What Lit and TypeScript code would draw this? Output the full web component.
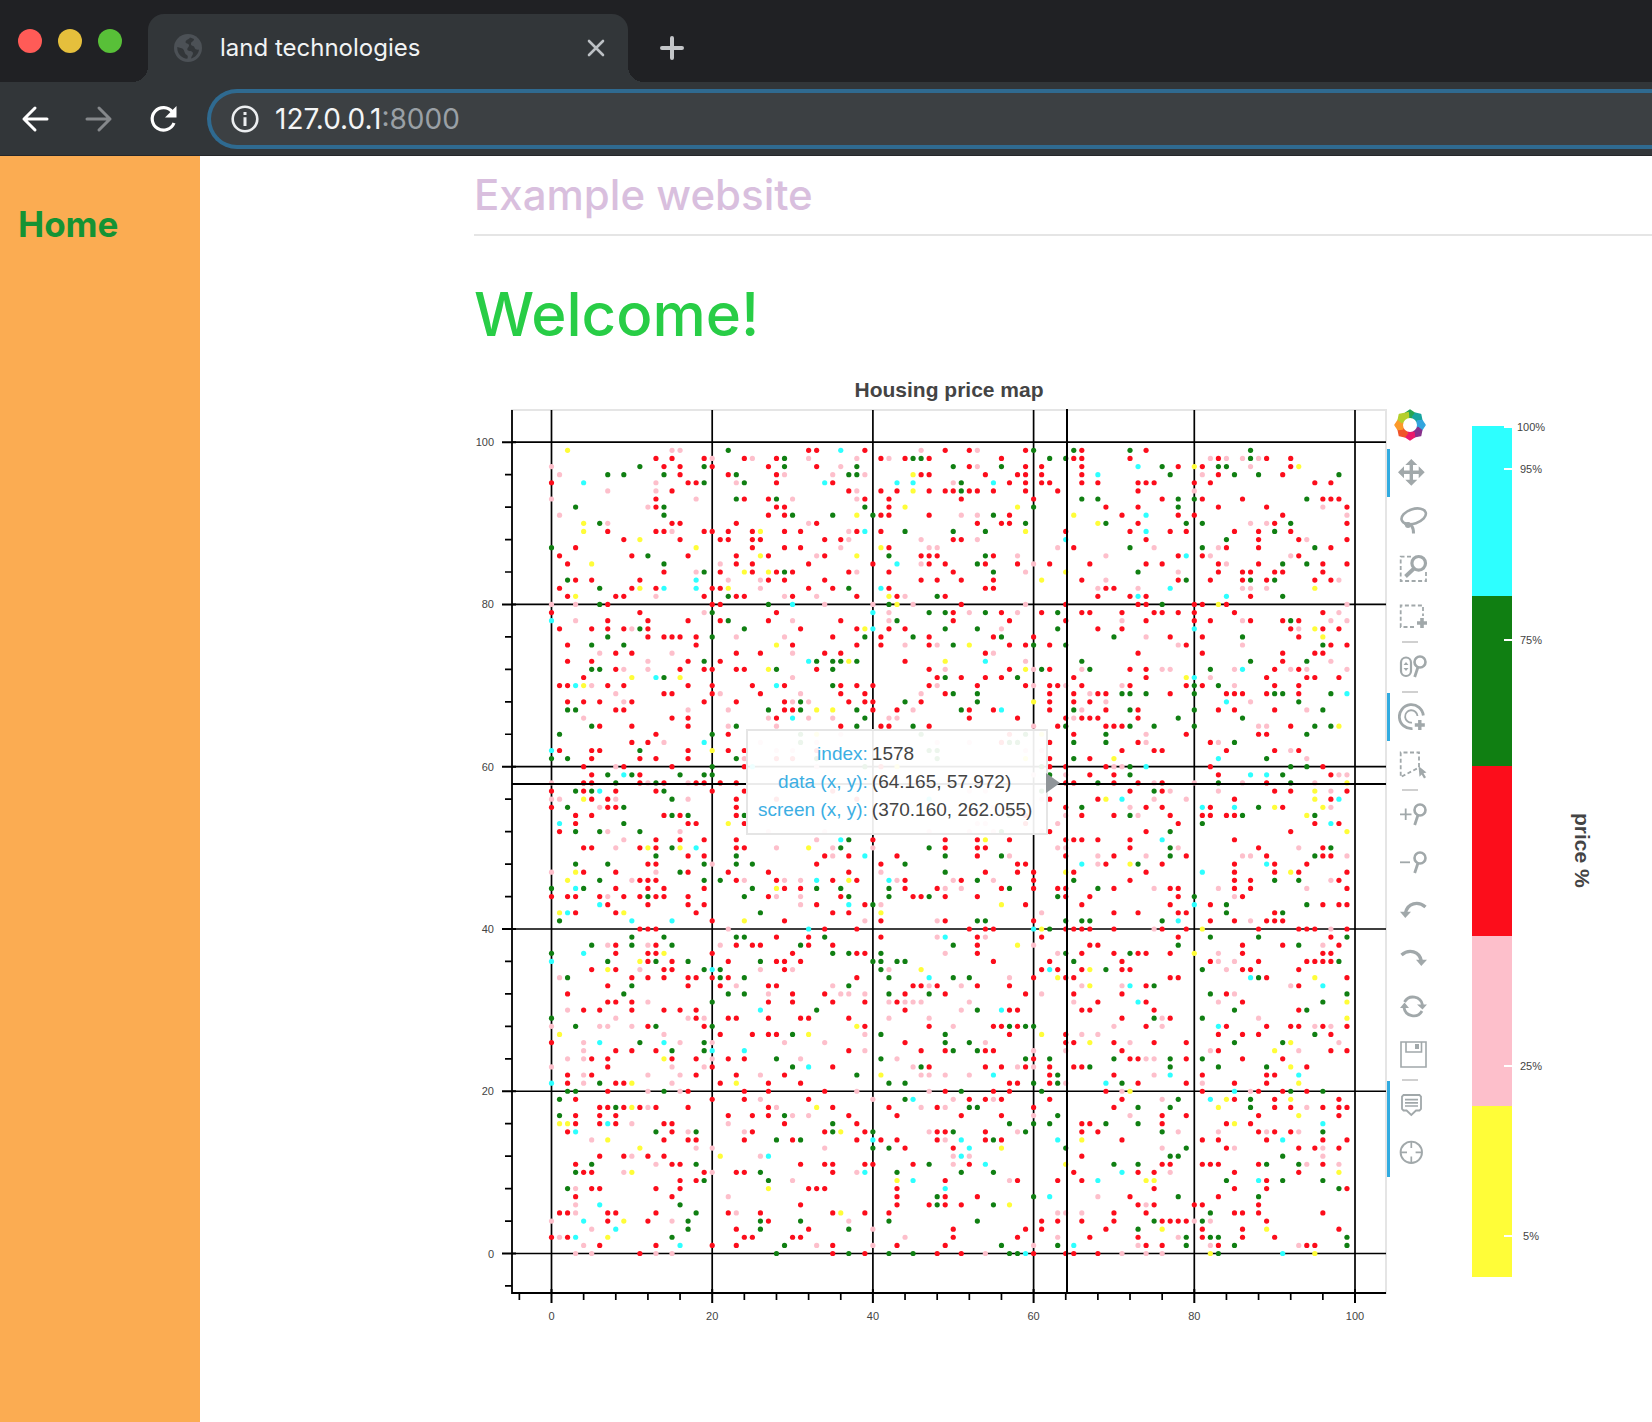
import { LitElement, html, css, svg } from "lit";
import { customElement } from "lit/decorators.js";
import { classMap } from "lit/directives/class-map.js";

/* Scatter rows, from y = 99 down to y = 0: each entry is column + colour key. */
const ROWS = `2y 15p 16p 22g 32r 33r 36c 39r 46p 49r 52r 53p 59r 60g 65g 66r 72g 74r 87g
13r 15r 19r 20p 24r 25p 28r 29g 32p 38p 41r 42p 44r 45g 46g 47r 56r 62g 64g 65r 66r 72r 82p 83r 84p 86p 87g 88p 89r 92r
0p 11g 14r 16r 19g 20r 27r 29g 33r 36p 38g 50g 52r 53p 56g 59r 61r 66r 73c 76g 78r 80y 81r 83g 84g 87p 92r 93y
1p 7g 9g 14g 16r 22r 23g 28r 29p 35p 37g 38g 39p 45y 46r 47r 54r 58r 59r 61r 66r 68c 77g 81p 83r 85g 88g 91r 98g
0r 4c 13p 17r 18r 19g 23p 24g 28r 34c 35r 43c 45c 50p 51g 55c 57r 59r 61r 62r 66r 68r 73r 74r 75r 80r 82r 95r 97r
7p 13p 15r 37r 38p 41r 43r 45y 47r 49r 50r 51g 52r 53r 55r 59r 63r 73r 80p
0p 13r 18p 23g 24r 27r 28g 30p 38p 39r 42r 51r 60r 66g 68g 76r 78g 80g 81r 86r 94g 96r 97r 98r
3g 12p 13r 14g 28r 29r 39g 42r 44y 58y 60g 69r 73r 78g 83r 89r 96p 99r
1p 14g 27r 29r 30g 35g 38y 40g 41r 42r 47r 51p 53p 55g 57r 65y 71r 74c 78r 80r 91r 99p
4y 6g 7p 15r 16r 23r 32p 33r 53r 56r 57r 59g 68y 69g 73r 79g 81g 87p 89p 90r 92g 99r
4y 7r 13r 14r 15p 19r 20r 22r 25r 26y 29r 31r 37p 38r 39c 41r 44g 50g 54g 59y 64r 72r 74c 77r 79r 85r 88r 90g 92r
9r 11y 16r 21r 22r 25r 26r 34r 36r 37p 46p 50r 51r 53p 64c 74r 84g 88r 93r 94p 99r
0g 3r 18y 25r 29r 31r 36p 41y 42r 47p 48p 63p 65r 72g 75p 81g 83p 84r 88r 95g 97r
1r 10r 12g 17r 23r 26y 27r 33p 34r 38y 42g 46r 47r 48r 54g 55r 58p 69p 78r 79c 81r 82p 92p 93r
2r 5y 14g 21p 23r 25r 32r 40r 43c 46p 47r 49r 53g 54r 58r 60p 62r 67r 74r 76r 83r 84p 88r 91g 94g 96r 99r
14r 18p 19g 21r 24y 25r 27y 28r 29g 30r 37r 38p 42r 50r 55g 59p 64y 73g 78p 83r 86r 87r 90r 91r 96r
2g 3r 5r 11r 18c 22p 26p 27r 29r 34r 46r 48r 51r 55r 61y 66r 69p 78r 79g 82r 86r 87g 89r 90g 95r 97r 98p
1r 6g 10r 11y 13r 14c 18c 20r 21r 22y 26p 32r 35r 37g 41c 42r 54r 55r 68p 69r 70r 73p 77c 86p 87p 89p 95y
2r 3y 8r 9r 13p 19r 22g 23r 24r 29p 30r 33p 38r 42y 43r 44p 48g 49r 68r 72r 73c 74r 84c 87r 91g
0p 3p 6g 7r 20r 21r 27g 30c 34p 40p 42g 43y 45p 51r 59p 64r 73r 74r 76g 80r 81r 83y 84r 99p
0r 11r 19p 20g 28r 40c 42p 47g 49g 50r 52p 54g 56r 58p 61r 63g 66r 67r 71r 75r 76r 78r 80r 85r 96r 98p
0c 3p 7r 12r 17r 21r 22g 27r 30p 36r 42p 43g 50r 57r 64r 71p 74r 80r 82r 86p 87r 91r 92g 93r 97p 99p
1r 5r 7r 9r 10p 11g 12r 24g 31r 38r 39y 40c 42r 44r 49g 53g 56p 63g 68r 71r 80c 92r 93p 95y 96r 98r
7g 12r 14r 15r 16r 18r 20g 23p 29p 35r 39g 41r 45g 47r 55r 56g 60r 70g 74p 77r 81r 86g 93r 96y
2r 5g 9g 18r 28y 30r 38r 41r 44p 47r 48p 50g 52y 57r 59r 60g 62r 64g 78p 79r 86p 96g 97r 99r
6p 8r 10r 15p 23r 26r 30p 34r 36r 54r 55p 73r 81r 91r 95r 96r
2r 5r 12p 17r 19g 21r 32c 33g 35g 36g 37y 38g 44r 49y 54c 59p 66g 87g 91r 94g 97p
5g 6g 8r 9p 12p 16r 19r 20r 23r 24r 27y 28g 33r 35g 47r 49p 57r 59y 60p 61g 62r 66p 67g 72r 74r 76p 77p 82g 85p 86c 90r 92p 93r 94p 99p
4r 10y 13c 14g 16y 30p 48r 49g 51r 54r 56r 58g 65r 74r 79y 80c 82p 89r 94r 95r 98r
1r 2r 3c 4y 5p 7r 9r 17r 20r 25r 28c 29r 35g 36r 38r 40r 47r 48p 53r 59r 60p 62r 63r 64p 66r 71p 72r 79r 80g 81r 83g 85p 90r 93r
8p 14r 15r 20r 21p 26r 31p 36r 39r 46p 49r 50g 53g 62r 65r 67p 68r 69r 71g 72g 74g 77r 80g 84r 85r 86r 89r 90g 91g 93r 97g 99c
2r 4r 6r 9p 10r 19r 23r 29r 30p 31g 32p 37r 39r 40r 44g 46r 53g 60y 62r 65r 67r 69p 84c 87p 93g
2g 3g 8r 9r 17p 22p 27g 29r 30r 31g 33y 35y 38g 40r 43r 45p 51g 52r 55r 56c 62r 65g 66p 69r 72g 73r 80g 83r 85r 90r 94p 96g
4p 15r 17r 27p 28r 30c 32p 35p 39g 42p 43p 52r 58r 64r 65p 66r 67r 68r 73r 78g 86g
5g 6r 10r 17r 22p 23g 28p 36r 38g 41r 42r 45g 47r 60p 63r 64g 69r 70r 71r 72g 75g 80g 88p 89p 92r 95g 97g 98y
1g 13r 20g 22r 31g 33y 36p 46g 57r 59g 61y 65r 69g 74p 79r 88r 89r 94g
10r 12r 14p 19c 26p 31g 33p 48p 52p 56r 57g 58g 62r 65g 69g 73r 74p 82r 83p 85g
0c 1r 5r 6r 11g 17r 20y 22r 24r 28p 30p 33r 47g 48g 59p 61p 71r 75r 76r 84r 90r 92p 93r
0g 2g 5r 11r 13r 17r 23g 24p 28r 30r 33g 48g 59y 62r 65g 67r 70y 83c 89g 94p
4r 8p 9r 15r 20g 24r 25c 33p 39g 41r 43y 61g 62r 64r 69r 70p 71p 72g 74c 82r 92g 94g 96r
5r 7g 9c 10g 11r 16g 19g 20g 60p 62g 64p 67r 70r 72g 83r 87c 89c 91g 97r 98p 99p
0p 4r 5r 8g 11r 12p 13g 14r 17p 18r 19r 21r 23r 64r 65r 68g 70r 73r 75p 76r 80p 83g 86p 89r 92g 95p 99y
0r 3g 4r 5g 6c 8r 13r 14g 20r 24r 35r 52p 54p 61g 72r 75g 76r 77p 83p 90r 92r 95y 97p 99r
0p 1p 4y 5r 7r 8p 15g 17p 23r 28r 38r 47c 61p 62r 68r 69y 71c 75p 79p 85r 95y 97r 98c
0r 2g 6p 7r 8r 9g 23r 55p 57p 64r 66g 72p 74r 76r 81c 82r 85c 88g 90y 91r 96y 97p
3r 5r 14r 15g 16r 17g 23r 24g 57g 59r 64p 66r 70r 72g 73p 77r 81r 82r 84r 85r 86g 94y 95g
1c 3r 9g 17r 18r 22y 24r 53p 54p 59r 63p 78r 81g 95r 97c 98r
1r 3g 6g 7p 11g 16p 27p 34p 47p 52p 55p 56g 61p 62r 74r 77g 92r 99y
9p 13r 16r 19r 23r 33p 36c 37g 40r 49r 53r 54y 57r 64r 65r 66r 68r 72r 76c 85r
4r 5r 8p 11r 12y 13r 15g 16y 18c 23r 24r 28p 32y 35p 36g 40p 47g 49r 53r 54r 63p 64p 72r 77g 78p 88r 93p 96r 97g
13g 17r 19r 23g 34r 35p 37r 39c 43r 49g 53r 56g 57p 64r 68p 70r 74p 77g 79r 86p 87p 89r 95g 96r 97r 99p
3g 7g 12r 13r 19g 20p 23g 25g 33r 41r 44g 58r 59r 66c 68p 69r 72y 73g 76r 85r 89c 90r 94r
0p 3y 4r 8r 13p 16g 17r 22r 27r 37r 41p 49g 54r 58r 60r 64y 65r 74r 81c 85r 90r 92y 93r 99r
2y 6g 10p 11r 12r 13r 19g 21g 23r 24p 28r 29p 31p 33c 35r 37y 38r 42c 43p 44r 50p 51r 53g 55p 60r 65g 72r 85r 87r 90g 93g 97p 98r
0g 3c 4g 8r 12r 14r 19r 25g 28y 29r 31r 33g 36g 42g 44r 48r 49p 51p 56r 57g 60r 63r 64r 68g 70r 75p 77r 78r 83p 85r 87r 94p 99r
0r 2r 3r 6r 7p 9r 11r 12g 13r 14r 17r 24g 27r 28p 31p 36r 37g 42g 45r 46r 47g 49r 53r 63g 64r 67r 78r 80g 85p 86r
6c 7r 12r 17r 19r 31p 33r 37c 39r 40g 41p 56y 59r 66r 77r 80c 82r 84g 94g 96r 98r 99r
1y 2c 3r 8r 9y 18r 26g 35r 37r 41y 61p 70r 73r 78r 79r 84g 90r 91g
1g 10c 15c 20r 24y 29r 39p 41r 48p 49r 53g 54g 60r 64g 66g 67g 76g 78c 82r 85r 87p 89r 90r 91r
11r 12r 13r 22p 32c 34r 38r 52r 54r 55r 60c 61y 62g 64r 65r 66r 67r 70r 75p 76r 79r 81y 88r 93r 94r 95r 97p 99r
10g 14g 23g 24g 28r 32r 34g 41r 48p 49c 53r 54p 61r 78r 82g 88g 97r 99g
5g 7p 8r 10g 12p 13r 15g 21p 23r 25r 26r 31g 32r 35r 50g 53r 58y 60p 67r 68r 78g 86r 91r 93g 96p 98r
0g 4c 8r 12r 13r 14y 20r 30r 35g 37g 38r 39r 41g 49p 53r 63p 64g 66r 70r 72g 73r 74r 77r 80y 83p 86r 96r 97r
0c 7g 11y 12r 13g 15r 17g 22r 26g 28r 29r 31r 40g 41g 43g 44g 55r 62r 65g 71r 82r 83p 85p 88r 94r 95r 96r 97r 98g
5r 7y 8r 11p 14r 15r 19g 20c 21g 26p 29r 30p 41g 42p 46y 61r 62c 63r 66r 67y 69g 71r 72r 81g 84p 86r 87r 93r
1p 2g 10r 12r 14r 17r 18r 20r 21g 22r 24g 38r 42g 47c 50g 52g 57p 60r 63y 64r 65r 77r 78r 87c 88g 89r 95y 99r
7r 10g 17r 21r 23p 27r 28r 35p 37g 45r 46r 47p 48r 51p 53r 57r 66p 67y 71p 72c 74r 75g 92p 93r 96c
2r 9g 22g 24g 27p 30r 34r 36p 37p 39p 42g 44r 47g 49r 59r 61p 65r 71r 82g 84r 85p 99g
7r 8r 10r 12p 20g 27r 30r 35r 39r 42p 43r 44p 45p 46p 52p 65p 68r 73c 74r 83p 86r 96g 99y
2p 4r 6r 10r 14r 16r 18r 26c 33g 44r 51p 53g 56c 57r 58r 66r 67r 75r 85g 93r 94g
0g 8p 17p 18r 19p 22r 23r 27r 31r 32r 37r 42p 47p 71r 75g 76p 77r 81g 88p 99y
0p 3g 6p 7p 10p 12r 13g 19r 20g 38y 39r 47r 50p 55r 56r 57g 58r 59g 60g 70p 74r 76p 83c 84r 89r 92r 93r 95p 96r 97p 99r
1y 14p 21r 25r 27r 28r 30g 32y 39p 41g 49g 57r 61y 64r 66p 68p 83r 86r 88r 95g 97r
0r 4p 6c 11g 14c 16p 19g 20p 29p 34p 44r 49g 52g 54p 64r 65r 67y 70r 72p 75r 79r 85g 91g 92y 98p
4p 8r 10r 13r 15g 19g 20c 24c 37r 39p 46r 49r 50g 53g 54r 55r 60p 64p 71r 82p 83r 90y 93p 97r 99r
2p 4p 5r 7r 14y 15r 18r 20p 22r 24r 28g 31p 41g 43p 59g 60r 62g 70g 72r 73r 74p 75p 77g 79r 81g 86r 91r
0p 7r 15p 19p 20r 30g 32c 35r 45p 46g 47r 54r 56r 58p 59r 60p 62r 65r 66r 67g 77g 83g 89g 92y 94r
2r 4p 5r 12p 16p 18r 23r 26p 29r 38g 41y 46p 47p 49p 52p 55c 62r 63g 70r 75p 77c 81r 89r 90r 93c
0c 2r 4p 6g 8r 9r 10y 15p 21r 23y 27r 31r 42g 44g 57r 58r 60g 62r 63g 64p 69c 71g 73r 79r 81p 85r 89r 93y
2g 3g 7r 12p 14g 16p 17r 24r 27r 34r 38p 47p 49r 51g 55r 57r 61g 69r 71p 72y 81r 85c 87p 88r 91r 92g 94r 96g
1g 3r 20r 24r 26p 32r 40p 44g 45c 50p 52r 54r 55p 56r 62r 71r 76p 78g 82c 84y 85r 87g 90r 92y 98r
6r 7r 8g 9r 10y 11r 12p 13r 17r 27r 28p 33y 35r 42r 46p 48r 49p 52g 53g 60r 70r 73g 77g 83y 87g 90r 92r 94p 96r 98r 99r
1g 3r 6r 8r 22r 25r 27r 29g 30p 32p 37r 43r 51r 56r 60p 63g 72p 76r 79r 88r 93y 98r
1y 2y 3r 6r 7c 8r 10p 14r 15r 22p 29r 35g 38r 57g 60g 62g 66r 67r 69g 73g 76r 84r 85y 87r 96c
2r 3c 13g 15r 17p 18g 24p 25r 34r 35g 36y 39r 40g 47p 48r 49r 50g 54r 58p 59g 66r 68r 76g 78p 83p 88r 89p 90r 92r 93p 96g
5p 7y 14r 17r 18r 24r 28g 30r 31g 38r 40c 41r 43r 48r 49p 51c 54r 55g 56r 63c 66y 71r 81r 83r 89r 91c 96r 99r
11y 18p 20p 34p 40g 42g 44r 50r 52c 56y 64g 76p 79g 84r 85p 93r 95r 96p 98r
6r 9r 10p 12r 14r 21y 26p 27c 50p 51c 52p 66r 77g 78g 91g 96p
3r 5g 13p 15r 16r 18g 31r 34r 35r 39r 40r 45r 47g 50p 52r 54c 64y 70g 73g 76r 77r 81r 82r 83r 88r 89g 93g 94p 96r 98p
3g 4r 5r 9p 10y 19r 20p 23r 24r 26g 35r 38p 39c 43g 51g 55g 65r 71c 73r 75r 77p 85r 93r 98y
16r 18r 19g 27g 30p 43y 45c 49r 57p 58r 63r 66r 68c 74y 75y 84g 88c 89r 91g 96g
2g 3p 5r 6r 13r 16r 27y 32r 33r 34r 43r 49c 75r 85r 89r 98g 99r
3r 15r 22p 43r 48g 49r 53r 60g 62c 68p 72r 78g 83r 88g
3p 6c 16g 31r 43r 47r 48g 49r 51r 55g 57y 73r 74p 75r 80r 81r 88r
1r 2r 3p 7r 8r 13r 18g 22r 23p 26r 35r 36y 39r 42r 63p 64p 66p 70r 74r 82g 85r 86r 88r 96r
0p 4c 7r 9y 12r 15p 17g 26g 27r 31g 37p 42g 53g 61r 63r 66r 70r 75g 76r 77r 78r 79r 80p 81g 82p 89r
5p 8c 17g 23r 26g 32r 37g 40p 50r 59r 61r 69r 73g 76y 81r 86r 89y 98r
0r 1p 2r 3c 7y 15g 24r 25r 30r 31r 44p 50r 58r 63p 67r 73r 78p 79g 81r 82g 83g 86r 90r 99g
4p 6r 13r 16c 20r 23r 29g 33p 35r 40p 43r 49r 56g 60p 63g 65c 73p 74r 76r 79g 82p 83r 85g 93p 94r 95r 99g
3p 5p 11r 13p 15p 28g 35r 37g 39r 42g 45g 48r 51r 54p 57g 58g 59c 60r 64r 65r 68r 71p 74p 76p 82y 83g 91c 95y`.split("\n");

const COLORS: Record<string, string> = {
  r: "#fc0d1b",
  g: "#107f12",
  p: "#fdbfcb",
  y: "#fffd38",
  c: "#2dffff",
};

const POINTS = ROWS.flatMap((row, i) =>
  row.split(" ").map((cell) => ({
    x: parseInt(cell, 10),
    y: 99 - i,
    color: COLORS[cell.slice(-1)],
  })),
);

/* Plot scales, in the drawing's own units. */
const sx = (v: number) => 77.5 + v * 8.035;
const sy = (v: number) => 846.5 - v * 8.113;
const FRAME = { left: 38, top: 3, right: 912, bottom: 886 };
const MAJOR = [0, 20, 40, 60, 80, 100];
const MINOR = Array.from({ length: 26 }, (_, i) => i * 4 - 4).filter((v) => v % 20 !== 0);

@customElement("browser-bar")
export class BrowserBar extends LitElement {
  static styles = css`
    :host { display: block; font-family: Inter, "Liberation Sans", sans-serif; }
    .tabs { display: flex; height: 82px; background: #202124; }
    .lights { display: flex; gap: 16px; padding: 29px 0 0 18px; width: 130px; }
    .light { width: 24px; height: 24px; border-radius: 50%; }
    .red { background: #ff5b57; }
    .amber { background: #e5bf3c; }
    .green { background: #58c038; }
    .tab {
      position: relative;
      display: flex;
      align-items: center;
      width: 480px;
      box-sizing: border-box;
      margin-top: 14px;
      padding: 0 20px 0 26px;
      background: #323639;
      border-radius: 16px 16px 0 0;
    }
    .tab::before, .tab::after {
      content: "";
      position: absolute;
      bottom: 0;
      width: 16px;
      height: 16px;
    }
    .tab::before { left: -16px; background: radial-gradient(circle at 0 0, #202124 16px, #323639 16px); }
    .tab::after { right: -16px; background: radial-gradient(circle at 100% 0, #202124 16px, #323639 16px); }
    .name { flex: 1; padding-left: 18px; color: #f1f3f4; font-size: 24px; line-height: 30px; }
    button { display: grid; place-items: center; padding: 0; border: 0; background: none; }
    .new { width: 56px; margin: 14px 0 0 16px; }
    .tools {
      display: flex;
      align-items: center;
      height: 74px;
      box-sizing: border-box;
      padding-left: 15px;
      background: #323639;
      border-bottom: 1px solid #25272a;
    }
    .nav { width: 40px; height: 40px; margin-right: 24px; }
    .address {
      display: flex;
      align-items: center;
      flex: 1;
      height: 60px;
      box-sizing: border-box;
      border: 4px solid #2f6a90;
      border-right: 0;
      border-radius: 30px 0 0 30px;
      background: #3c4043;
      padding-left: 20px;
      font-size: 28px;
      line-height: 32px;
      color: #9aa0a6;
    }
    .address input {
      field-sizing: content;
      margin-left: 16px;
      padding: 0;
      border: 0;
      outline: 0;
      background: none;
      font: inherit;
      color: #f4f5f6;
    }
  `;

  render() {
    return html`
      <div class="tabs">
        <div class="lights">
          <span class="light red"></span><span class="light amber"></span><span class="light green"></span>
        </div>
        <div class="tab">
          <svg width="28" height="28" viewBox="0 0 28 28">
            <circle cx="14" cy="14" r="14" fill="#4c5156" />
            <path d="M16 3.5c-1 2-4 2-4.500 4.500c0 2 3 1 3.500 3c.5 2-2.500 3-1.500 5c1 1.500 5 .5 5.500 3c.2 2-1.500 3-2 5.500c4-1 7.500-4.500 8-9c-2 .5-4 0-4.500-2c-.5-2.500-4-1-3.500-4c.2-2 3-2 3-4.500z M3.300 13c2 1 5 .5 6.500 3c1 2.500 1 4 3 5c1.500 1 1 2.500.5 3.700C8 24.500 3.300 20 3.300 14z" fill="#323639" />
          </svg>
          <span class="name">land technologies</span>
          <button aria-label="Close tab">
            <svg width="24" height="24" viewBox="0 0 24 24" stroke="#bcc0c4" stroke-width="2.600" stroke-linecap="round"><path d="M5 5L19 19M19 5L5 19" /></svg>
          </button>
        </div>
        <button class="new" aria-label="New tab">
          <svg width="26" height="26" viewBox="0 0 26 26" stroke="#c3c5c8" stroke-width="4" stroke-linecap="round"><path d="M13 3V23M3 13H23" /></svg>
        </button>
      </div>
      <div class="tools">
        <button class="nav" aria-label="Back">
          <svg width="32" height="32" viewBox="0 0 32 32" fill="none" stroke="#fff" stroke-width="3" stroke-linecap="round" stroke-linejoin="round"><path d="M28 16H5M16 5L5 16L16 27" /></svg>
        </button>
        <button class="nav" aria-label="Forward">
          <svg width="32" height="32" viewBox="0 0 32 32" fill="none" stroke="#85888b" stroke-width="3" stroke-linecap="round" stroke-linejoin="round"><path d="M4 16H27M16 5L27 16L16 27" /></svg>
        </button>
        <button class="nav" aria-label="Reload">
          <svg width="32" height="32" viewBox="0 0 32 32" fill="none" stroke="#fff" stroke-width="3.200"><path d="M25.500 9A11.300 11.300 0 1 0 27 20" /><path d="M29.500 3V14.500H18z" fill="#fff" stroke="none" /></svg>
        </button>
        <label class="address">
          <svg width="28" height="28" viewBox="0 0 28 28"><circle cx="14" cy="14" r="12.300" fill="none" stroke="#eceef0" stroke-width="2.600" /><path d="M12.500 7h3v3h-3zM12.500 12.300h3V21h-3z" fill="#eceef0" /></svg>
          <input value="127.0.0.1" aria-label="Address" /><span>:8000</span>
        </label>
      </div>
    `;
  }
}

type Tool = { name: string; icon: unknown; active?: boolean; split?: boolean };

const lens = svg`<circle cx="22" cy="10" r="5.500" stroke-width="2.600"/><path d="M20 15L16.700 25" stroke-width="2.800"/>`;

const TOOLS: Tool[] = [
  { name: "Pan", active: true, icon: svg`<path d="M13.300 5V24M4 14.300H23" stroke-width="3.400"/><path d="M13.300 1l6 6h-12zM13.300 27.700l6-6h-12zM0 14.300l6-6v12zM26.700 14.300l-6-6v12z" fill="#a1a8aa" stroke="none"/>` },
  { name: "Lasso Select", icon: svg`<ellipse cx="15.700" cy="10.300" rx="12.600" ry="7.200" transform="rotate(-18 15.700 10.300)" stroke-width="2.600"/><path d="M7 19.500c3-3 6-1 7 1c1.500 2 1.500 4 1.500 7" stroke-width="3"/><circle cx="10" cy="19" r="3" fill="#a1a8aa" stroke="none"/>` },
  { name: "Box Zoom", icon: svg`<path d="M13 2.700H2.700V27H28V18" stroke-width="1.800" stroke-dasharray="4 2.500"/><circle cx="20.700" cy="9.300" r="6.800" stroke-width="3.200"/><path d="M16 14.500L7.500 22.500" stroke-width="3.800"/>` },
  { name: "Box Select", split: true, icon: svg`<path d="M16 25H2.700V3.500H25V14" stroke-width="1.800" stroke-dasharray="4 2.500"/><path d="M24 16V26M19 21H29" stroke-width="3.600"/>` },
  { name: "Wheel Zoom", split: true, icon: svg`<rect x="3" y="5.500" width="10" height="18.500" rx="5" stroke-width="2.200"/><path d="M5.500 13l2.500-3l2.500 3zM5.500 16l2.500 3l2.500-3z" fill="#a1a8aa" stroke="none"/>${lens}` },
  { name: "Tap", active: true, icon: svg`<path d="M25.300 13.500A12 12 0 1 0 14.500 26.600" stroke-width="2.800"/><path d="M19.500 14A6.200 6.200 0 1 0 14 20.600" stroke-width="1.800"/><path d="M21.800 18V28M16.800 23H26.800" stroke-width="3.400"/>` },
  { name: "Poly Select", split: true, icon: svg`<path d="M21 17V2.500H2.700V27L20 18" stroke-width="1.800" stroke-dasharray="4 2.500"/><path d="M20.500 16l8 6.500l-3 .7l2.500 4l-2 1.200l-2.300-4l-2.200 2.400z" fill="#a1a8aa" stroke="none"/>` },
  { name: "Zoom In", icon: svg`<path d="M7.700 8.500V20M2 14.300H13.500" stroke-width="1.800"/>${lens}` },
  { name: "Zoom Out", icon: svg`<path d="M2 14.300H12" stroke-width="1.800"/>${lens}` },
  { name: "Undo", icon: svg`<path d="M7.500 17C9.500 7 20 4.500 27.500 11" stroke-width="3.400"/><path d="M2 15.700H13L7.300 22z" fill="#a1a8aa" stroke="none"/>` },
  { name: "Redo", icon: svg`<path d="M3.500 11C11 4.500 21.500 7 23.300 17" stroke-width="3.400"/><path d="M18 15.700H29L23.300 22z" fill="#a1a8aa" stroke="none"/>` },
  { name: "Reset", icon: svg`<path d="M6.500 10A9.700 9.700 0 0 1 24.500 13M24 19A9.700 9.700 0 0 1 6 15.500" stroke-width="2.800"/><path d="M2 16L6.500 10.500L11 16zM19 12.500H29L24.500 17.500z" fill="#a1a8aa" stroke="none"/>` },
  { name: "Save", split: true, icon: svg`<path d="M3 2H28V27H3zM8 2V12H23.500V2" stroke-width="1.600"/><path d="M17 4h4v5h-4z" fill="#a1a8aa" stroke="none"/>` },
  { name: "Hover", active: true, icon: svg`<path d="M5.500 5H21.500L23 6.500V19L21.500 20.500H18L13.300 25L8.600 20.500H5.500L4 19V6.500z" stroke-width="1.800"/><path d="M7 9.600H20M7 12.800H20M7 16H20" stroke-width="1.700"/>` },
  { name: "Crosshair", active: true, icon: svg`<circle cx="13.300" cy="14.300" r="10.700" stroke-width="1.900"/><path d="M13.300 4V10M13.300 18.500V25M3 14.300H9M17.600 14.300H24" stroke-width="1.700"/>` },
];

const PETALS = ["#26a551", "#17a5a0", "#32a5de", "#87318c", "#eb196c", "#f0542a", "#fb9a2a", "#b5cf2c"];

@customElement("plot-toolbar")
export class PlotToolbar extends LitElement {
  static styles = css`
    :host { display: flex; flex-direction: column; width: 44px; }
    .logo { display: block; height: 32px; margin: 0 0 8px 8px; }
    button {
      display: flex;
      align-items: center;
      width: 44px;
      height: 48px;
      box-sizing: border-box;
      padding: 0 0 0 8px;
      border: 0;
      border-left: 4px solid transparent;
      background: none;
    }
    button.active { border-left-color: #31abe0; }
    .split { width: 16px; height: 2px; margin-left: 16px; background: #d0d0d0; }
  `;

  render() {
    return html`
      <a class="logo" href="https://bokeh.org/" aria-label="Bokeh">
        <svg width="32" height="32" viewBox="-16 -16 32 32">
          ${PETALS.map((c, i) => svg`<path d="M-4.500 -12L0 -15L7.500 -10L4 -6L-4 -7.500z" fill=${c} stroke=${c} stroke-width="1.500" stroke-linejoin="round" transform="rotate(${i * 45})" />`)}
          <circle r="7" fill="#fff" />
        </svg>
      </a>
      ${TOOLS.map(
        (t) => html`
          <button class=${classMap({ active: !!t.active })} aria-label=${t.name} aria-pressed=${t.active ? "true" : "false"}>
            <svg width="30" height="30" viewBox="0 0 30 30" fill="none" stroke="#a1a8aa">${t.icon}</svg>
          </button>
          ${t.split ? html`<div class="split"></div>` : null}
        `,
      )}
    `;
  }
}

@customElement("scatter-plot")
export class ScatterPlot extends LitElement {
  static styles = css`
    :host { display: block; position: relative; font-family: "Liberation Sans", Arial, sans-serif; }
    h3 { margin: 0; padding: 0 0 3px 36px; font-size: 21px; line-height: 28px; text-align: center; color: #444; }
    .plot { display: block; }
    .tick { font-size: 11px; fill: #444; }
    .tooltip {
      position: absolute;
      left: 272px;
      top: 353px;
      display: grid;
      grid-template-columns: auto auto;
      column-gap: 4px;
      margin: 0;
      padding: 9px 14px 9px 10px;
      border: 2px solid #e5e5e5;
      background: rgba(255, 255, 255, 0.92);
      font-size: 19px;
      line-height: 28px;
      white-space: nowrap;
    }
    .tooltip::after {
      content: "";
      position: absolute;
      left: 100%;
      top: 42px;
      border: solid transparent;
      border-width: 10px 0 10px 14px;
      border-left-color: #909599;
    }
    dt { text-align: right; color: #3caee3; }
    dd { margin: 0; color: #444; }
  `;

  render() {
    const { left, top, right, bottom } = FRAME;
    return html`
      <h3>Housing price map</h3>
      <svg class="plot" width="914" height="924" viewBox="0 0 914 924" role="img" aria-label="Housing price map">
        <rect x=${left} y=${top} width=${right - left} height=${bottom - top} fill="#fff" stroke="#e5e5e5" stroke-width="2" />
        ${MAJOR.map(
          (v) => svg`
            <path d="M${sx(v)} ${top}V${bottom}M${left} ${sy(v)}H${right}" stroke="#000" stroke-width="1.700" />
            <path d="M${sx(v)} ${bottom - 4}V${bottom + 10}M${left + 4} ${sy(v)}H${left - 10}" stroke="#000" stroke-width="2" />
            <text class="tick" x=${sx(v)} y=${bottom + 27} text-anchor="middle">${v}</text>
            <text class="tick" x=${left - 18} y=${sy(v) + 4} text-anchor="end">${v}</text>`,
        )}
        ${MINOR.map((v) => svg`<path d="M${sx(v)} ${bottom}V${bottom + 7}M${left} ${sy(v)}H${left - 7}" stroke="#000" stroke-width="1.700" />`)}
        <path d="M${left} ${top}V${bottom}H${right}" fill="none" stroke="#000" stroke-width="1.800" />
        ${POINTS.map((p) => svg`<circle cx=${sx(p.x)} cy=${sy(p.y)} r="2.600" fill=${p.color} />`)}
        <path d="M593 ${top - 1}V${bottom}M${left} 377H${right}" stroke="#000" stroke-width="2" />
      </svg>
      <dl class="tooltip">
        <dt>index:</dt><dd>1578</dd>
        <dt>data (x, y):</dt><dd>(64.165, 57.972)</dd>
        <dt>screen (x, y):</dt><dd>(370.160, 262.055)</dd>
      </dl>
    `;
  }
}

const BANDS = ["#2dffff", "#107f12", "#fc0d1b", "#fdbfcb", "#fffd38"];
const LEVELS = [
  { label: "100%", y: 1 },
  { label: "95%", y: 43 },
  { label: "75%", y: 214 },
  { label: "25%", y: 640 },
  { label: "5%", y: 810 },
];

@customElement("color-scale")
export class ColorScale extends LitElement {
  static styles = css`
    :host { display: flex; align-items: center; font-family: "Liberation Sans", Arial, sans-serif; }
    .tick { font-size: 11px; fill: #444; }
    .caption { writing-mode: vertical-rl; margin-left: 20px; font-size: 21px; line-height: 24px; font-weight: 700; color: #444; }
  `;

  render() {
    return html`
      <svg width="78" height="856" viewBox="0 -4 78 856" role="img" aria-label="price %">
        ${BANDS.map((c, i) => svg`<rect x="0" y=${i * 170} width="40" height="171" fill=${c} />`)}
        ${LEVELS.map(
          (l) => svg`
            <path d="M32 ${l.y}H40" stroke="#fff" stroke-width="2" />
            <text class="tick" x="59" y=${l.y + 4} text-anchor="middle">${l.label}</text>`,
        )}
      </svg>
      <span class="caption">price %</span>
    `;
  }
}

@customElement("app-root")
export class AppRoot extends LitElement {
  static styles = css`
    :host {
      display: flex;
      flex-direction: column;
      min-height: 100vh;
      background: #fff;
      font-family: Inter, "Liberation Sans", sans-serif;
      overflow: hidden;
    }
    .page { display: flex; flex: 1; }
    .side { width: 200px; flex: none; box-sizing: border-box; padding: 44px 18px; background: #fbac52; }
    .side a { color: #149334; font-size: 35px; line-height: 48px; font-weight: 700; text-decoration: none; }
    main { flex: 1; min-width: 0; padding-left: 274px; }
    .brand { margin: 0; padding: 12px 0; border-bottom: 2px solid #e5e5e5; color: #d9bfde; font-size: 42px; line-height: 54px; font-weight: 500; }
    h1 { margin: 0; padding: 38px 0; color: #28cd46; font-size: 60px; line-height: 80px; font-weight: 500; }
    .figure { display: flex; align-items: flex-start; margin-top: -16px; }
    .figure > * { flex: none; }
    plot-toolbar { margin: 33px 0 0 -2px; }
    color-scale { margin: 46px 0 0 42px; }
  `;

  render() {
    return html`
      <browser-bar></browser-bar>
      <div class="page">
        <nav class="side"><a href="#home">Home</a></nav>
        <main>
          <h2 class="brand">Example website</h2>
          <h1>Welcome!</h1>
          <section class="figure">
            <scatter-plot></scatter-plot>
            <plot-toolbar></plot-toolbar>
            <color-scale></color-scale>
          </section>
        </main>
      </div>
    `;
  }
}
